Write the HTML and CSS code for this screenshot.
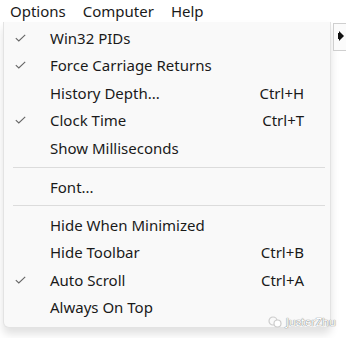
FILE: index.html
```html
<!DOCTYPE html>
<html lang="en">
<head>
    <meta charset="UTF-8">
    <title>Options menu</title>
    <link rel="stylesheet" href="styles.css">
</head>
<body>
    <div class="menubar">
        <span class="menubar-item">Options</span>
        <span class="menubar-item">Computer</span>
        <span class="menubar-item">Help</span>
    </div>

    <div class="stage">
        <div class="menu">
            <div class="item"><span class="check"><svg class="tick" viewBox="0 0 11 8"><path d="M0.8 4.2 L3.8 7 L10.2 0.8"/></svg></span><span class="label">Win32 PIDs</span><span class="key"></span></div>
            <div class="item"><span class="check"><svg class="tick" viewBox="0 0 11 8"><path d="M0.8 4.2 L3.8 7 L10.2 0.8"/></svg></span><span class="label">Force Carriage Returns</span><span class="key"></span></div>
            <div class="item"><span class="check"></span><span class="label">History Depth...</span><span class="key">Ctrl+H</span></div>
            <div class="item"><span class="check"><svg class="tick" viewBox="0 0 11 8"><path d="M0.8 4.2 L3.8 7 L10.2 0.8"/></svg></span><span class="label">Clock Time</span><span class="key">Ctrl+T</span></div>
            <div class="item"><span class="check"></span><span class="label">Show Milliseconds</span><span class="key"></span></div>
            <div class="sep"></div>
            <div class="item"><span class="check"></span><span class="label">Font...</span><span class="key"></span></div>
            <div class="sep sep-tight"></div>
            <div class="item"><span class="check"></span><span class="label">Hide When Minimized</span><span class="key"></span></div>
            <div class="item"><span class="check"></span><span class="label">Hide Toolbar</span><span class="key">Ctrl+B</span></div>
            <div class="item"><span class="check"><svg class="tick" viewBox="0 0 11 8"><path d="M0.8 4.2 L3.8 7 L10.2 0.8"/></svg></span><span class="label">Auto Scroll</span><span class="key">Ctrl+A</span></div>
            <div class="item"><span class="check"></span><span class="label">Always On Top</span><span class="key"></span></div>
        </div>
        <div class="toolbar-edge">
            <svg width="8" height="14" viewBox="0 0 8 14"><path d="M1 1 L6 6 L1 11 Z" fill="#111"/><rect x="0" y="3" width="2" height="6" fill="#111"/></svg>
        </div>
        <div class="watermark">
            <svg width="14" height="12" viewBox="0 0 14 12"><circle cx="5" cy="5" r="4" fill="none" stroke="#ccc" stroke-width="1.2"/><circle cx="9.5" cy="7.5" r="3.5" fill="#fff" stroke="#ccc" stroke-width="1.2"/></svg>
            <span>JusterZhu</span>
        </div>
    </div>
</body>
</html>
```

FILE: styles.css
```css
body {
    margin: 0;
    background: #ffffff;
    font-family: 'Noto Sans', 'Noto Sans CJK SC', sans-serif;
    color: #1a1a1a;
    width: 346px;
    height: 338px;
    overflow: hidden;
}
.menubar {
    height: 22px;
    display: flex;
    align-items: center;
    font-size: 15px;
    padding-left: 10px;
    gap: 17px;
    background: #ffffff;
}
.menubar-item {
    line-height: 22px;
}
.stage {
    position: relative;
    display: flex;
    align-items: flex-start;
    padding-left: 3px;
}
.menu {
    width: 328px;
    background: #f9f9f9;
    border: 1px solid #e3e3e3;
    border-top: none;
    border-radius: 0 0 6px 6px;
    padding: 2px 0 6px;
    box-shadow: 0 6px 8px rgba(0, 0, 0, 0.12);
    font-size: 15px;
}
.item {
    height: 27.5px;
    display: flex;
    align-items: center;
}
.check {
    width: 46px;
    padding-left: 11px;
    box-sizing: border-box;
    display: flex;
    align-items: center;
}
.tick {
    width: 11px;
    height: 8px;
    fill: none;
    stroke: #666;
    stroke-width: 1.1;
}
.label {
    flex: 1;
}
.key {
    width: 80px;
    padding-right: 26px;
    text-align: right;
}
.sep {
    height: 1px;
    background: #dcdcdc;
    margin: 5px 5px 6px 9px;
}
.sep-tight {
    margin: 4px 5px 5px 9px;
}
.toolbar-edge {
    margin-top: 1px;
    margin-left: 2px;
    width: 12px;
    height: 26px;
    border: 1px solid #cfcfcf;
    border-right: none;
    background: #fbfbfb;
    display: flex;
    align-items: center;
    justify-content: flex-end;
}
.watermark {
    position: absolute;
    left: 268px;
    top: 292px;
    display: flex;
    align-items: center;
    gap: 4px;
    font-size: 11px;
    color: #ffffff;
    text-shadow: 0 0 1px #777, 0 0 1px #777;
}
```
